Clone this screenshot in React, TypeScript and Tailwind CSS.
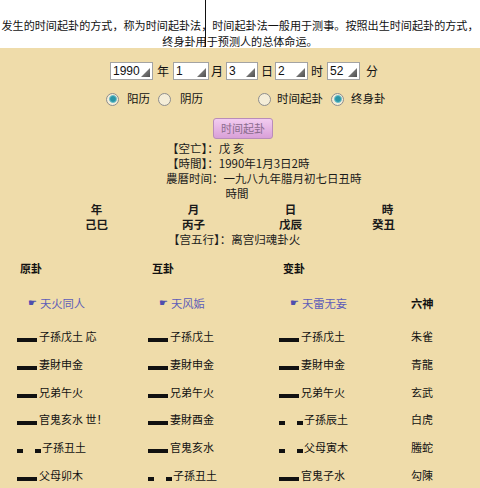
import React from "react";

const CJK = '"Noto Sans CJK SC", "Noto Sans", sans-serif';

function Sel({ v, cls }: { v: string; cls: string }) {
  return (
    <div
      className={`relative h-[18px] bg-white border border-[#a3a3a3] flex items-center pl-[2px] ${cls}`}
      style={{ fontFamily: '"Liberation Sans", Arial, sans-serif' }}
    >
      <span className="text-[12px] leading-none text-[#111]">{v}</span>
      <svg
        className="absolute right-[2px] bottom-[2px]"
        width="9"
        height="9"
        viewBox="0 0 9 9"
      >
        <defs>
          <linearGradient id="tg" x1="0" y1="0" x2="1" y2="1">
            <stop offset="0" stopColor="#9a9a9a" />
            <stop offset="1" stopColor="#4f4f4f" />
          </linearGradient>
        </defs>
        <polygon points="9,0 9,9 0,9" fill="url(#tg)" />
      </svg>
    </div>
  );
}

function Radio({ on }: { on: boolean }) {
  return (
    <span className="w-[13px] h-[13px] rounded-full border border-[#8d8d8d] bg-[#f4edd8] flex items-center justify-center">
      {on && <span className="w-[8px] h-[8px] rounded-full bg-[#2a95a6] border border-[#6fc1cc]" />}
    </span>
  );
}

function Yao({ yang, text }: { yang: number; text: string }) {
  return (
    <div className="flex items-end h-[16px] leading-[16px] text-[11px] text-[#111]">
      {yang ? (
        <span className="w-[20px] h-[4px] bg-[#111] mb-[2px] mr-[2px] shrink-0" />
      ) : (
        <span className="flex mb-[2px] mr-[1px] shrink-0">
          <span className="w-[6px] h-[4px] bg-[#111]" />
          <span className="w-[12px]" />
          <span className="w-[6px] h-[4px] bg-[#111]" />
        </span>
      )}
      <span className="whitespace-nowrap">{text}</span>
    </div>
  );
}

const cols: [number, string][][] = [
  [
    [1, "子孫戊土 応"],
    [1, "妻財申金"],
    [1, "兄弟午火"],
    [1, "官鬼亥水 世！"],
    [0, "子孫丑土"],
    [1, "父母卯木"],
  ],
  [
    [1, "子孫戊土"],
    [1, "妻財申金"],
    [1, "兄弟午火"],
    [1, "妻財酉金"],
    [1, "官鬼亥水"],
    [0, "子孫丑土"],
  ],
  [
    [1, "子孫戊土"],
    [1, "妻財申金"],
    [1, "兄弟午火"],
    [0, "子孫辰土"],
    [0, "父母寅木"],
    [1, "官鬼子水"],
  ],
];
const liushen = ["朱雀", "青龍", "玄武", "白虎", "螣蛇", "勾陳"];

export default function App() {
  return (
    <div
      className="relative w-[480px] h-[488px] overflow-hidden bg-[#efdcaa]"
      style={{ fontFamily: CJK }}
    >
      {/* header text */}
      <div className="h-[48px] bg-white pt-[17px] overflow-hidden text-[11.1px] leading-[16px] text-[#111]">
        <div className="whitespace-nowrap text-center -mx-[20px]">
          发生的时间起卦的方式，称为时间起卦法，时间起卦法一般用于测事。按照出生时间起卦的方式，
        </div>
        <div className="whitespace-nowrap text-center">终身卦用于预测人的总体命运。</div>
      </div>
      <div className="absolute left-[205px] top-0 w-[1px] h-[47px] bg-[#111]" />

      {/* select row */}
      <div className="flex items-center mt-[14px] pl-[110px] text-[12px] text-[#111] h-[18px]">
        <Sel v="1990" cls="w-[43px]" />
        <span className="ml-[4px] w-[12px]">年</span>
        <Sel v="1" cls="w-[36px] ml-[4px]" />
        <span className="ml-[2px] w-[12px]">月</span>
        <Sel v="3" cls="w-[32px] ml-[3px]" />
        <span className="ml-[3px] w-[12px]">日</span>
        <Sel v="2" cls="w-[33px] ml-[2px]" />
        <span className="ml-[3px] w-[12px]">时</span>
        <Sel v="52" cls="w-[33px] ml-[4px]" />
        <span className="ml-[6px] w-[12px]">分</span>
      </div>

      {/* radio row */}
      <div className="flex items-center h-[16px] mt-[11px] pl-[106px] text-[11.5px] text-[#111]">
        <Radio on />
        <span className="ml-[8px]">阳历</span>
        <span className="ml-[8px]"><Radio on={false} /></span>
        <span className="ml-[9px]">阴历</span>
        <span className="ml-[55px]"><Radio on={false} /></span>
        <span className="ml-[6px]">时间起卦</span>
        <span className="ml-[8px]"><Radio on /></span>
        <span className="ml-[7px]">终身卦</span>
      </div>

      {/* button */}
      <div className="mt-[11px] pl-[213px]">
        <div className="w-[60px] h-[21px] rounded-[3px] border border-[#b98db9] bg-gradient-to-b from-[#f2ccf0] to-[#d9a0d8] flex items-center justify-center text-[11px] text-[#8a6c8e]">
          时间起卦
        </div>
      </div>

      {/* info */}
      <div className="mt-[1.5px] text-[11.5px] leading-[15.3px] text-[#1a1a1a]">
        <div className="pl-[167px] whitespace-nowrap">【空亡】：戊 亥</div>
        <div className="pl-[167px] whitespace-nowrap">【時間】：1990年1月3日2時</div>
        <div className="pl-[166px] whitespace-nowrap">農曆时间：一九八九年腊月初七日丑時</div>
        <div className="text-center pr-[6px]">時間</div>
        <div className="ml-[48px] w-[388px] grid grid-cols-4 text-center font-bold">
          <span>年</span>
          <span>月</span>
          <span>日</span>
          <span>時</span>
          <span>己巳</span>
          <span>丙子</span>
          <span>戊辰</span>
          <span className="pr-[8px]">癸丑</span>
        </div>
        <div className="pl-[168px] whitespace-nowrap">【宫五行】：离宫归魂卦火</div>
      </div>

      {/* gua table */}
      <div className="mt-[12.5px] pl-[17px] grid grid-cols-[131px_131px_131px_80px] h-[16px] leading-[16px] text-[11px] font-bold text-[#111]">
        <span className="pl-[3px]">原卦</span>
        <span className="pl-[4px]">互卦</span>
        <span className="pl-[4px]">变卦</span>
        <span />
      </div>
      <div className="mt-[19px] pl-[17px] grid grid-cols-[131px_131px_131px_80px] h-[16px] leading-[16px] text-[11.3px]">
        {["天火同人", "天风姤", "天雷无妄"].map((n) => (
          <span key={n} className="pl-[11px] text-[#5d5db8] whitespace-nowrap flex items-center">
            <span
              className="text-[10px] mr-[3px] text-[#4f4fae]"
              style={{ fontFamily: '"DejaVu Sans", sans-serif' }}
            >
              ☛
            </span>
            {n}
          </span>
        ))}
        <span className="font-bold text-[#111] pl-[1px]">六神</span>
      </div>

      <div className="mt-[11px]">
        {liushen.map((ls, i) => (
          <div
            key={ls}
            className="pl-[17px] grid grid-cols-[131px_131px_131px_80px] h-[27.8px] items-center"
          >
            {cols.map((c, j) => (
              <Yao key={j} yang={c[i][0]} text={c[i][1]} />
            ))}
            <div className="h-[16px] leading-[16px] text-[11px] text-[#111] pl-[1px]">{ls}</div>
          </div>
        ))}
      </div>
    </div>
  );
}
